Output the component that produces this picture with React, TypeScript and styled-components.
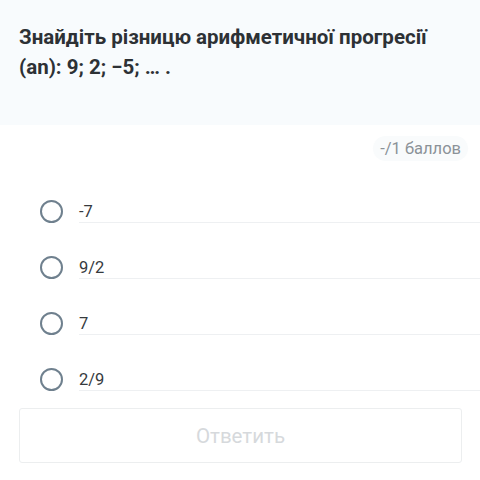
import React, { useState } from 'react';
import styled, { createGlobalStyle } from 'styled-components';

const GlobalStyle = createGlobalStyle`
    body {
        margin: 0;
        background: #ffffff;
        font-family: Roboto, 'Noto Sans', sans-serif;
    }
`;

const Page = styled.div`
    width: 480px;
    height: 480px;
    overflow: hidden;
    background: #ffffff;
`;

const Header = styled.div`
    background: #f8fbfd;
    height: 125px;
    box-sizing: border-box;
    padding: 22px 19px 0;
`;

const Title = styled.h1`
    margin: 0;
    font-size: 20.5px;
    line-height: 30px;
    font-weight: 700;
    color: #2d3135;
`;

const ScoreRow = styled.div`
    display: flex;
    justify-content: flex-end;
    padding: 11px 12px 0 0;
`;

const ScorePill = styled.span`
    background: #f9fbfc;
    border-radius: 13px;
    padding: 3px 7px;
    font-size: 16.5px;
    line-height: 19px;
    color: #8b9298;
`;

const Options = styled.div`
    display: flex;
    flex-direction: column;
    gap: 32px;
    padding-top: 38px;
`;

const Option = styled.label`
    display: flex;
    align-items: center;
    height: 24px;
    padding-left: 40px;
    cursor: pointer;
`;

const Radio = styled.span<{ $checked: boolean }>`
    flex: none;
    width: 23px;
    height: 23px;
    box-sizing: border-box;
    border-radius: 50%;
    border: 2.4px solid #6f808e;
    margin-right: 16px;
    display: flex;
    align-items: center;
    justify-content: center;
    &::after {
        content: '';
        width: 11px;
        height: 11px;
        border-radius: 50%;
        background: #6f808e;
        display: ${(p) => (p.$checked ? 'block' : 'none')};
    }
`;

const OptionText = styled.span`
    flex: 1;
    align-self: stretch;
    box-sizing: border-box;
    border-bottom: 1px solid #eef0f2;
    padding-top: 2px;
    font-size: 16.5px;
    line-height: 22px;
    color: #363a3e;
`;

const Footer = styled.div`
    padding: 17px 18px 0 19px;
`;

const SubmitButton = styled.button`
    width: 100%;
    height: 55px;
    background: #ffffff;
    border: 1px solid #eceeef;
    border-radius: 3px;
    font-family: Roboto, 'Noto Sans', sans-serif;
    font-size: 20.5px;
    color: #d6d9dc;
    cursor: default;
`;

const answers = ['-7', '9/2', '7', '2/9'];

export default function App() {
    const [selected, setSelected] = useState<number | null>(null);

    return (
        <Page>
            <GlobalStyle />
            <Header>
                <Title>
                    Знайдіть різницю арифметичної прогресії (an): 9; 2; −5; … .
                </Title>
            </Header>
            <ScoreRow>
                <ScorePill>-/1 баллов</ScorePill>
            </ScoreRow>
            <Options>
                {answers.map((a, i) => (
                    <Option key={a} onClick={() => setSelected(i)}>
                        <Radio $checked={selected === i} />
                        <OptionText>{a}</OptionText>
                    </Option>
                ))}
            </Options>
            <Footer>
                <SubmitButton disabled={selected === null}>Ответить</SubmitButton>
            </Footer>
        </Page>
    );
}
